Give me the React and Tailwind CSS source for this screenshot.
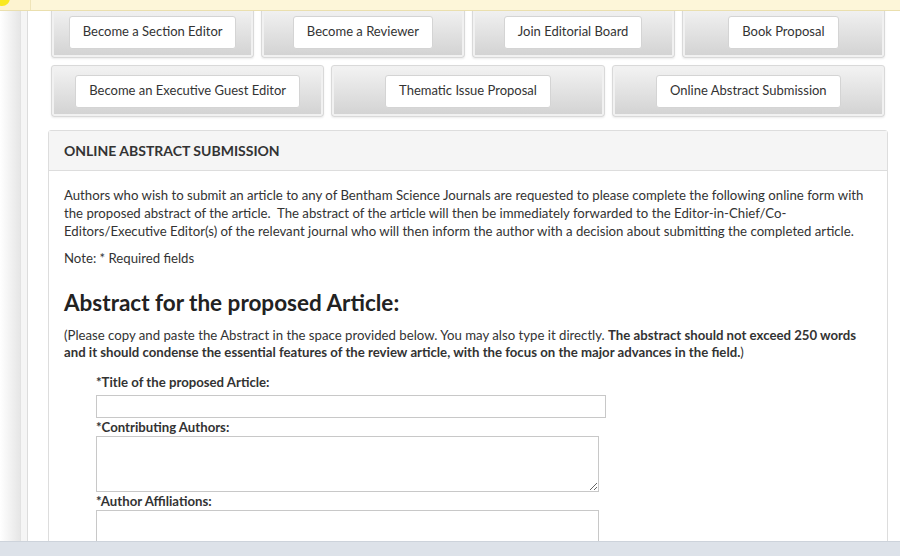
import React from "react";

const font = { fontFamily: "Lato, 'Liberation Sans', sans-serif" };

function Cell({ label }) {
  return (
    <div className="flex-1 h-[52px] flex items-center justify-center rounded-[3px] border border-[#d9d9d9] bg-gradient-to-b from-[#f3f3f3] to-[#d2d2d2] shadow-[inset_0_0_0_2px_#f1f1f1,0_1px_2px_rgba(0,0,0,0.08)]">
      <button
        type="button"
        className="h-[33px] px-[13px] bg-white border border-[#d4d4d4] rounded-[3px] text-[13px] text-[#333]"
      >
        {label}
      </button>
    </div>
  );
}

export default function App() {
  return (
    <div className="w-[900px] h-[556px] overflow-hidden bg-white flex flex-col text-[#333]" style={font}>
      {/* Notification bar */}
      <div className="h-[11px] flex shrink-0 bg-[#fdf6d9] border-b border-[#eadfae] relative z-10">
        <div className="w-[31px] relative overflow-hidden border-r border-[#efe4b8] bg-[#fdf3d0]">
          <div className="absolute -left-[6px] -top-[10px] w-[16px] h-[16px] rounded-full bg-[#f9e81f]" />
        </div>
        <div className="flex-1" />
      </div>

      {/* Main */}
      <div className="flex-1 flex min-h-0">
        <div className="w-[20px] bg-gradient-to-r from-white to-[#e6e6e6]" />
        <div className="w-[8px] bg-[#f5f5f5] border-l border-[#e2e2e2] border-r border-r-[#dcdcdc]" />
        <div className="flex-1 pl-[20px] pr-[12px] -mt-[5px] overflow-hidden">
          <div className="px-[3px] flex flex-col gap-[7px]">
            <div className="flex gap-[7px]">
              <Cell label="Become a Section Editor" />
              <Cell label="Become a Reviewer" />
              <Cell label="Join Editorial Board" />
              <Cell label="Book Proposal" />
            </div>
            <div className="flex gap-[7px]">
              <Cell label="Become an Executive Guest Editor" />
              <Cell label="Thematic Issue Proposal" />
              <Cell label="Online Abstract Submission" />
            </div>
          </div>

          <div className="mt-[13px] border border-[#dddddd] rounded-t-[3px]">
            <div className="h-[40px] bg-[#f5f5f5] border-b border-[#dddddd] flex items-center px-[15px]">
              <h3 className="text-[14px] font-bold text-[#333] uppercase">Online Abstract Submission</h3>
            </div>
            <div className="px-[15px] pt-[15px] pb-[20px] text-[13.2px]">
              <p className="leading-[18px]">
                Authors who wish to submit an article to any of Bentham Science Journals are requested to please complete the following online form with the proposed abstract of the article.&nbsp; The abstract of the article will then be immediately forwarded to the Editor-in-Chief/Co-Editors/Executive Editor(s) of the relevant journal who will then inform the author with a decision about submitting the completed article.
              </p>
              <p className="leading-[18px] mt-[9px]">Note: * Required fields</p>

              <h2 className="mt-[23px] text-[22.5px] leading-[26px] font-bold text-[#222]">
                Abstract for the proposed Article:
              </h2>
              <p className="mt-[11px] leading-[17px]">
                (Please copy and paste the Abstract in the space provided below. You may also type it directly.{" "}
                <strong>
                  The abstract should not exceed 250 words and it should condense the essential features of the review article, with the focus on the major advances in the field.
                </strong>
                )
              </p>

              <div className="pl-[32px] mt-[13px] flex flex-col">
                <label className="font-bold leading-[17px] mb-[4px]">*Title of the proposed Article:</label>
                <input type="text" className="w-[510px] h-[23px] border border-[#c8c8c8] bg-white outline-none" />
                <label className="font-bold leading-[17px] mt-[1px]">*Contributing Authors:</label>
                <textarea className="w-[503px] h-[56px] border border-[#c8c8c8] bg-white outline-none block" />
                <label className="font-bold leading-[17px] mt-[1px]">*Author Affiliations:</label>
                <textarea className="w-[503px] h-[56px] border border-[#c8c8c8] bg-white outline-none block" />
              </div>
            </div>
          </div>
        </div>
      </div>

      {/* Bottom status bar */}
      <div className="h-[15px] shrink-0 bg-[#dde2e9] border-t border-[#cdd3db]" />
    </div>
  );
}
